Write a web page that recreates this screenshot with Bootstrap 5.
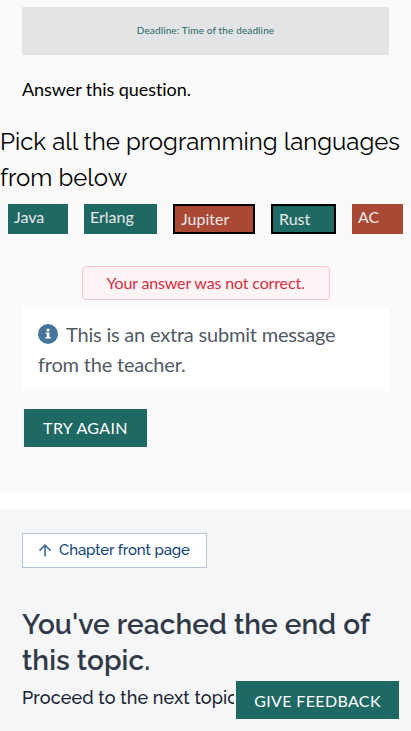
<!DOCTYPE html>
<html lang="en">
<head>
<meta charset="utf-8">
<meta name="viewport" content="width=device-width, initial-scale=1">
<title>Quiz</title>
<link href="https://cdn.jsdelivr.net/npm/bootstrap@5.3.0/dist/css/bootstrap.min.css" rel="stylesheet">
<style>
body{font-family:Lato,sans-serif;background:#fff;color:#000;height:731px;overflow:hidden;font-variant-ligatures:none}
.quiz{background:#fafafa;height:493px;padding-top:7px}
.inset{margin-left:22px;margin-right:22px}
.deadline{background:#e2e4e6;color:#1f6964;height:48px;font-size:10px;letter-spacing:.13px;padding-bottom:2px}
.intro{font-size:18px;line-height:28px;margin-top:20px;letter-spacing:-.06px}
.display-face{font-family:Raleway,Lato,sans-serif}
.question{font-size:24px;line-height:36px;margin-top:21px;white-space:nowrap}
.options{gap:16px;padding:8px 8px 0}
.option{height:30px;font-size:16px;line-height:24px;padding:1px 6px;color:#e9e9e9;background:#1f6964}
.option.wrong{background:#a84835}
.option.chosen{border:2px solid #000}
.result{width:248px;height:34px;margin:32px auto 0;font-size:16px;letter-spacing:-.15px;color:#d52d41;background:#fff4f5;border:1px solid #f3c7cc;border-radius:4px}
.message{margin-top:7px;height:84px;background:#fff;padding:12px 16px;font-size:20px;line-height:30px;letter-spacing:-.2px;color:#535a66}
.message svg{margin:-6px 8px 0 0}
.btn.action{height:42px;border:2px solid #f5f6f7;border-radius:0;background:#1f6964;background-clip:padding-box;color:#fff;font-size:16px;line-height:24px;letter-spacing:.36px;padding:7px 0}
.ending{margin-top:16px;background:#f5f6f7;height:222px;padding-top:24px}
.btn.chapter{height:35px;width:185px;background:#fff;border:1px solid #b4c4d6;border-radius:0;color:#12437c;font-size:15px;letter-spacing:-.1px;padding:0 0 0 15px;line-height:33px}
.btn.chapter svg{margin-right:7px}
.ending h2{font-size:28px;line-height:36px;font-weight:600;letter-spacing:.08px;color:#313947;margin:39px 0 0;white-space:nowrap}
.proceed{font-size:18px;line-height:28px;font-weight:500;letter-spacing:.12px;color:#1a2333;margin-top:5px;white-space:nowrap}
.btn.feedback{right:10px;bottom:10px;width:167px;padding:8px 0 6px}
</style>
</head>
<body>
<main class="quiz">
  <div class="inset deadline d-flex align-items-center justify-content-center"><span>Deadline: Time of the deadline</span></div>
  <p class="inset intro mb-0">Answer this question.</p>
  <h1 class="question display-face fw-normal mb-0">Pick all the programming languages<br>from below</h1>
  <div class="options d-flex">
    <div class="option" style="width:60px">Java</div>
    <div class="option" style="width:73px">Erlang</div>
    <div class="option wrong chosen" style="width:82px">Jupiter</div>
    <div class="option chosen" style="width:65px">Rust</div>
    <div class="option wrong" style="width:51px">AC</div>
  </div>
  <div class="result d-flex align-items-center justify-content-center">Your answer was not correct.</div>
  <div class="inset message"><svg width="20" height="20" viewBox="0 0 20 20" aria-hidden="true"><circle cx="10" cy="10" r="10" fill="#46759b"/><circle cx="10" cy="6.1" r="1.5" fill="#fff"/><path d="M7.7 8.6h3.7v4.5h1.2v1.5H7.6v-1.5h1.2v-3H7.7z" fill="#fff"/></svg>This is an extra submit message<br>from the teacher.</div>
  <button class="btn action inset" style="width:127px;margin-top:16px">TRY AGAIN</button>
</main>
<section class="ending">
  <div class="inset">
    <a class="btn chapter display-face fw-medium d-flex align-items-center" href="#"><svg width="14" height="14" viewBox="0 0 14 14" fill="none" stroke="#46759b" stroke-width="1.7" aria-hidden="true"><path d="M7 12.5V1.5M1.5 6.7 7 1.2l5.5 5.5"/></svg><span>Chapter front page</span></a>
    <h2 class="display-face">You've reached the end of<br>this topic.</h2>
    <p class="proceed display-face mb-0">Proceed to the next topic</p>
  </div>
</section>
<button class="btn action feedback position-fixed">GIVE FEEDBACK</button>
<script src="https://cdn.jsdelivr.net/npm/bootstrap@5.3.0/dist/js/bootstrap.bundle.min.js"></script>
</body>
</html>
